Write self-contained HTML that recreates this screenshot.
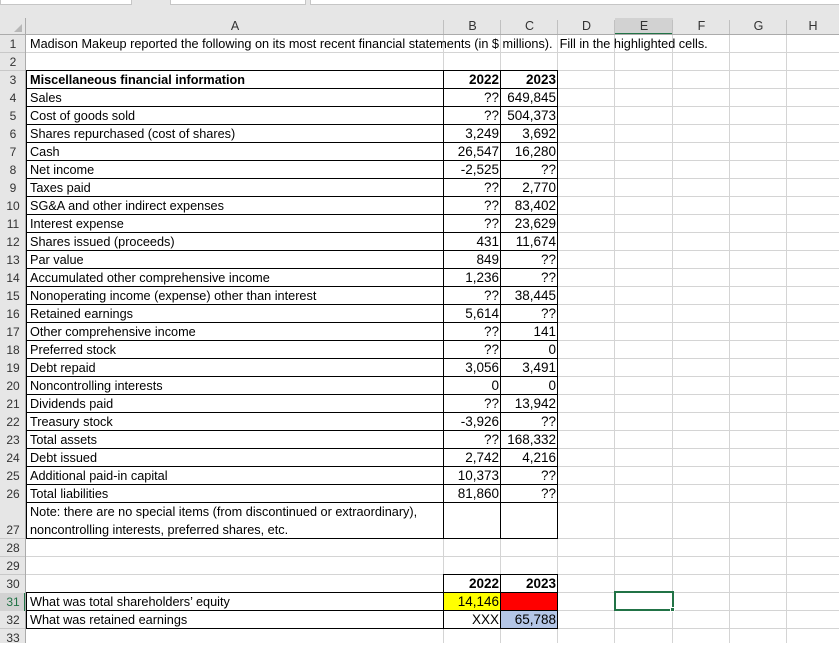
<!DOCTYPE html>
<html><head><meta charset="utf-8"><style>
*{margin:0;padding:0;box-sizing:border-box}
body{width:839px;height:643px;overflow:hidden;background:#fff;position:relative;font-family:"Liberation Sans",Arial,sans-serif;font-size:12.7px;color:#000}
.a{position:absolute}
.h{position:absolute;height:1px}
.v{position:absolute;width:1px}
.t{position:absolute;height:18px;line-height:18px;white-space:nowrap}
.r{position:absolute;height:18px;line-height:18px;text-align:right;white-space:nowrap;font-size:13.5px}
.rn{position:absolute;left:0;width:26px;height:18px;line-height:18px;text-align:center;font-size:12px;color:#333}
.ch{position:absolute;top:18px;height:17px;line-height:17px;text-align:center;font-size:12.5px;color:#333}
</style></head><body>
<div class="a" style="left:0;top:0;width:839px;height:35px;background:#e6e6e6"></div>
<div class="a" style="left:0;top:0;width:132px;height:5px;background:#fff;border:1px solid #c6c6c6;border-top:0"></div>
<div class="a" style="left:170px;top:0;width:136px;height:5px;background:#fff;border:1px solid #c6c6c6;border-top:0"></div>
<div class="a" style="left:310px;top:0;width:529px;height:5px;background:#fff;border:1px solid #c6c6c6;border-top:0;border-right:0"></div>
<div class="a" style="left:0;top:35px;width:26px;height:608px;background:#e6e6e6"></div>
<div class="a" style="left:0;top:593px;width:26px;height:18px;background:#d2d2d2;border-right:2px solid #217346"></div>
<div class="a" style="left:615px;top:18px;width:58px;height:17px;background:#d2d2d2;border-bottom:2px solid #217346"></div>
<div class="a" style="left:14px;top:24px;width:0;height:0;border-left:8px solid transparent;border-bottom:8px solid #b7b7b7"></div>
<div class="h" style="left:0;top:34px;width:839px;background:#ababab"></div>
<div class="v" style="left:25px;top:18px;height:625px;background:#ababab"></div>
<div class="ch" style="left:26px;width:418px">A</div>
<div class="ch" style="left:444px;width:57px">B</div>
<div class="ch" style="left:501px;width:57px">C</div>
<div class="ch" style="left:558px;width:57px">D</div>
<div class="ch" style="left:615px;width:58px">E</div>
<div class="ch" style="left:673px;width:57px">F</div>
<div class="ch" style="left:730px;width:57px">G</div>
<div class="ch" style="left:787px;width:52px">H</div>
<div class="v" style="left:443px;top:20px;height:14px;background:#c0c0c0"></div>
<div class="v" style="left:500px;top:20px;height:14px;background:#c0c0c0"></div>
<div class="v" style="left:557px;top:20px;height:14px;background:#c0c0c0"></div>
<div class="v" style="left:614px;top:20px;height:14px;background:#c0c0c0"></div>
<div class="v" style="left:672px;top:20px;height:14px;background:#c0c0c0"></div>
<div class="v" style="left:729px;top:20px;height:14px;background:#c0c0c0"></div>
<div class="v" style="left:786px;top:20px;height:14px;background:#c0c0c0"></div>
<div class="v" style="left:443px;top:35px;height:608px;background:#d4d4d4"></div>
<div class="v" style="left:500px;top:35px;height:608px;background:#d4d4d4"></div>
<div class="v" style="left:557px;top:35px;height:608px;background:#d4d4d4"></div>
<div class="v" style="left:614px;top:35px;height:608px;background:#d4d4d4"></div>
<div class="v" style="left:672px;top:35px;height:608px;background:#d4d4d4"></div>
<div class="v" style="left:729px;top:35px;height:608px;background:#d4d4d4"></div>
<div class="v" style="left:786px;top:35px;height:608px;background:#d4d4d4"></div>
<div class="h" style="left:26px;top:52px;width:813px;background:#d4d4d4"></div>
<div class="h" style="left:26px;top:70px;width:813px;background:#d4d4d4"></div>
<div class="h" style="left:26px;top:88px;width:813px;background:#d4d4d4"></div>
<div class="h" style="left:26px;top:106px;width:813px;background:#d4d4d4"></div>
<div class="h" style="left:26px;top:124px;width:813px;background:#d4d4d4"></div>
<div class="h" style="left:26px;top:142px;width:813px;background:#d4d4d4"></div>
<div class="h" style="left:26px;top:160px;width:813px;background:#d4d4d4"></div>
<div class="h" style="left:26px;top:178px;width:813px;background:#d4d4d4"></div>
<div class="h" style="left:26px;top:196px;width:813px;background:#d4d4d4"></div>
<div class="h" style="left:26px;top:214px;width:813px;background:#d4d4d4"></div>
<div class="h" style="left:26px;top:232px;width:813px;background:#d4d4d4"></div>
<div class="h" style="left:26px;top:250px;width:813px;background:#d4d4d4"></div>
<div class="h" style="left:26px;top:268px;width:813px;background:#d4d4d4"></div>
<div class="h" style="left:26px;top:286px;width:813px;background:#d4d4d4"></div>
<div class="h" style="left:26px;top:304px;width:813px;background:#d4d4d4"></div>
<div class="h" style="left:26px;top:322px;width:813px;background:#d4d4d4"></div>
<div class="h" style="left:26px;top:340px;width:813px;background:#d4d4d4"></div>
<div class="h" style="left:26px;top:358px;width:813px;background:#d4d4d4"></div>
<div class="h" style="left:26px;top:376px;width:813px;background:#d4d4d4"></div>
<div class="h" style="left:26px;top:394px;width:813px;background:#d4d4d4"></div>
<div class="h" style="left:26px;top:412px;width:813px;background:#d4d4d4"></div>
<div class="h" style="left:26px;top:430px;width:813px;background:#d4d4d4"></div>
<div class="h" style="left:26px;top:448px;width:813px;background:#d4d4d4"></div>
<div class="h" style="left:26px;top:466px;width:813px;background:#d4d4d4"></div>
<div class="h" style="left:26px;top:484px;width:813px;background:#d4d4d4"></div>
<div class="h" style="left:26px;top:502px;width:813px;background:#d4d4d4"></div>
<div class="h" style="left:26px;top:538px;width:813px;background:#d4d4d4"></div>
<div class="h" style="left:26px;top:556px;width:813px;background:#d4d4d4"></div>
<div class="h" style="left:26px;top:574px;width:813px;background:#d4d4d4"></div>
<div class="h" style="left:26px;top:592px;width:813px;background:#d4d4d4"></div>
<div class="h" style="left:26px;top:610px;width:813px;background:#d4d4d4"></div>
<div class="h" style="left:26px;top:628px;width:813px;background:#d4d4d4"></div>
<div class="h" style="left:0;top:52px;width:25px;background:#c8c8c8"></div>
<div class="h" style="left:0;top:70px;width:25px;background:#c8c8c8"></div>
<div class="h" style="left:0;top:538px;width:25px;background:#c8c8c8"></div>
<div class="h" style="left:0;top:556px;width:25px;background:#c8c8c8"></div>
<div class="h" style="left:0;top:574px;width:25px;background:#c8c8c8"></div>
<div class="h" style="left:0;top:628px;width:25px;background:#c8c8c8"></div>
<div class="a" style="left:444px;top:593px;width:57px;height:18px;background:#ffff00"></div>
<div class="a" style="left:501px;top:593px;width:57px;height:18px;background:#ff0000"></div>
<div class="a" style="left:501px;top:611px;width:57px;height:18px;background:#b4c6e7"></div>
<div class="h" style="left:26px;top:70px;width:532px;background:#000"></div>
<div class="h" style="left:26px;top:88px;width:532px;background:#000"></div>
<div class="h" style="left:26px;top:106px;width:532px;background:#000"></div>
<div class="h" style="left:26px;top:124px;width:532px;background:#000"></div>
<div class="h" style="left:26px;top:142px;width:532px;background:#000"></div>
<div class="h" style="left:26px;top:160px;width:532px;background:#000"></div>
<div class="h" style="left:26px;top:178px;width:532px;background:#000"></div>
<div class="h" style="left:26px;top:196px;width:532px;background:#000"></div>
<div class="h" style="left:26px;top:214px;width:532px;background:#000"></div>
<div class="h" style="left:26px;top:232px;width:532px;background:#000"></div>
<div class="h" style="left:26px;top:250px;width:532px;background:#000"></div>
<div class="h" style="left:26px;top:268px;width:532px;background:#000"></div>
<div class="h" style="left:26px;top:286px;width:532px;background:#000"></div>
<div class="h" style="left:26px;top:304px;width:532px;background:#000"></div>
<div class="h" style="left:26px;top:322px;width:532px;background:#000"></div>
<div class="h" style="left:26px;top:340px;width:532px;background:#000"></div>
<div class="h" style="left:26px;top:358px;width:532px;background:#000"></div>
<div class="h" style="left:26px;top:376px;width:532px;background:#000"></div>
<div class="h" style="left:26px;top:394px;width:532px;background:#000"></div>
<div class="h" style="left:26px;top:412px;width:532px;background:#000"></div>
<div class="h" style="left:26px;top:430px;width:532px;background:#000"></div>
<div class="h" style="left:26px;top:448px;width:532px;background:#000"></div>
<div class="h" style="left:26px;top:466px;width:532px;background:#000"></div>
<div class="h" style="left:26px;top:484px;width:532px;background:#000"></div>
<div class="h" style="left:26px;top:502px;width:532px;background:#000"></div>
<div class="h" style="left:26px;top:538px;width:532px;background:#000"></div>
<div class="v" style="left:26px;top:70px;height:469px;background:#000"></div>
<div class="v" style="left:443px;top:70px;height:469px;background:#000"></div>
<div class="v" style="left:500px;top:70px;height:469px;background:#000"></div>
<div class="v" style="left:557px;top:70px;height:469px;background:#000"></div>
<div class="h" style="left:443px;top:574px;width:115px;background:#000"></div>
<div class="h" style="left:26px;top:592px;width:532px;background:#000"></div>
<div class="h" style="left:26px;top:610px;width:532px;background:#000"></div>
<div class="h" style="left:26px;top:628px;width:532px;background:#000"></div>
<div class="v" style="left:26px;top:592px;height:37px;background:#000"></div>
<div class="v" style="left:443px;top:574px;height:55px;background:#000"></div>
<div class="v" style="left:500px;top:574px;height:55px;background:#000"></div>
<div class="v" style="left:557px;top:574px;height:55px;background:#000"></div>
<div class="a" style="left:614px;top:591px;width:60px;height:20px;border:2px solid #217346"></div>
<div class="a" style="left:670px;top:607px;width:5px;height:5px;background:#217346;border:1px solid #fff"></div>
<div class="rn" style="top:35px">1</div>
<div class="rn" style="top:53px">2</div>
<div class="rn" style="top:71px">3</div>
<div class="rn" style="top:89px">4</div>
<div class="rn" style="top:107px">5</div>
<div class="rn" style="top:125px">6</div>
<div class="rn" style="top:143px">7</div>
<div class="rn" style="top:161px">8</div>
<div class="rn" style="top:179px">9</div>
<div class="rn" style="top:197px">10</div>
<div class="rn" style="top:215px">11</div>
<div class="rn" style="top:233px">12</div>
<div class="rn" style="top:251px">13</div>
<div class="rn" style="top:269px">14</div>
<div class="rn" style="top:287px">15</div>
<div class="rn" style="top:305px">16</div>
<div class="rn" style="top:323px">17</div>
<div class="rn" style="top:341px">18</div>
<div class="rn" style="top:359px">19</div>
<div class="rn" style="top:377px">20</div>
<div class="rn" style="top:395px">21</div>
<div class="rn" style="top:413px">22</div>
<div class="rn" style="top:431px">23</div>
<div class="rn" style="top:449px">24</div>
<div class="rn" style="top:467px">25</div>
<div class="rn" style="top:485px">26</div>
<div class="rn" style="top:521px">27</div>
<div class="rn" style="top:539px">28</div>
<div class="rn" style="top:557px">29</div>
<div class="rn" style="top:575px">30</div>
<div class="rn" style="top:593px;color:#217346">31</div>
<div class="rn" style="top:611px">32</div>
<div class="rn" style="top:629px">33</div>
<div class="t" style="left:30px;top:35px">Madison Makeup reported the following on its most recent financial statements (in $ millions).&nbsp; Fill in the highlighted cells.</div>
<div class="t" style="left:30px;top:71px;font-weight:bold">Miscellaneous financial information</div>
<div class="t" style="left:30px;top:89px">Sales</div>
<div class="t" style="left:30px;top:107px">Cost of goods sold</div>
<div class="t" style="left:30px;top:125px">Shares repurchased (cost of shares)</div>
<div class="t" style="left:30px;top:143px">Cash</div>
<div class="t" style="left:30px;top:161px">Net income</div>
<div class="t" style="left:30px;top:179px">Taxes paid</div>
<div class="t" style="left:30px;top:197px">SG&amp;A and other indirect expenses</div>
<div class="t" style="left:30px;top:215px">Interest expense</div>
<div class="t" style="left:30px;top:233px">Shares issued (proceeds)</div>
<div class="t" style="left:30px;top:251px">Par value</div>
<div class="t" style="left:30px;top:269px">Accumulated other comprehensive income</div>
<div class="t" style="left:30px;top:287px">Nonoperating income (expense) other than interest</div>
<div class="t" style="left:30px;top:305px">Retained earnings</div>
<div class="t" style="left:30px;top:323px">Other comprehensive income</div>
<div class="t" style="left:30px;top:341px">Preferred stock</div>
<div class="t" style="left:30px;top:359px">Debt repaid</div>
<div class="t" style="left:30px;top:377px">Noncontrolling interests</div>
<div class="t" style="left:30px;top:395px">Dividends paid</div>
<div class="t" style="left:30px;top:413px">Treasury stock</div>
<div class="t" style="left:30px;top:431px">Total assets</div>
<div class="t" style="left:30px;top:449px">Debt issued</div>
<div class="t" style="left:30px;top:467px">Additional paid-in capital</div>
<div class="t" style="left:30px;top:485px">Total liabilities</div>
<div class="t" style="left:30px;top:503px">Note: there are no special items (from discontinued or extraordinary),</div>
<div class="t" style="left:30px;top:521px">noncontrolling interests, preferred shares, etc.</div>
<div class="t" style="left:30px;top:593px">What was total shareholders’ equity</div>
<div class="t" style="left:30px;top:611px">What was retained earnings</div>
<div class="r" style="left:444px;width:55px;top:71px;font-weight:bold">2022</div>
<div class="r" style="left:444px;width:55px;top:89px">??</div>
<div class="r" style="left:444px;width:55px;top:107px">??</div>
<div class="r" style="left:444px;width:55px;top:125px">3,249</div>
<div class="r" style="left:444px;width:55px;top:143px">26,547</div>
<div class="r" style="left:444px;width:55px;top:161px">-2,525</div>
<div class="r" style="left:444px;width:55px;top:179px">??</div>
<div class="r" style="left:444px;width:55px;top:197px">??</div>
<div class="r" style="left:444px;width:55px;top:215px">??</div>
<div class="r" style="left:444px;width:55px;top:233px">431</div>
<div class="r" style="left:444px;width:55px;top:251px">849</div>
<div class="r" style="left:444px;width:55px;top:269px">1,236</div>
<div class="r" style="left:444px;width:55px;top:287px">??</div>
<div class="r" style="left:444px;width:55px;top:305px">5,614</div>
<div class="r" style="left:444px;width:55px;top:323px">??</div>
<div class="r" style="left:444px;width:55px;top:341px">??</div>
<div class="r" style="left:444px;width:55px;top:359px">3,056</div>
<div class="r" style="left:444px;width:55px;top:377px">0</div>
<div class="r" style="left:444px;width:55px;top:395px">??</div>
<div class="r" style="left:444px;width:55px;top:413px">-3,926</div>
<div class="r" style="left:444px;width:55px;top:431px">??</div>
<div class="r" style="left:444px;width:55px;top:449px">2,742</div>
<div class="r" style="left:444px;width:55px;top:467px">10,373</div>
<div class="r" style="left:444px;width:55px;top:485px">81,860</div>
<div class="r" style="left:444px;width:55px;top:575px;font-weight:bold">2022</div>
<div class="r" style="left:444px;width:55px;top:593px">14,146</div>
<div class="r" style="left:444px;width:55px;top:611px">XXX</div>
<div class="r" style="left:501px;width:55px;top:71px;font-weight:bold">2023</div>
<div class="r" style="left:501px;width:55px;top:89px">649,845</div>
<div class="r" style="left:501px;width:55px;top:107px">504,373</div>
<div class="r" style="left:501px;width:55px;top:125px">3,692</div>
<div class="r" style="left:501px;width:55px;top:143px">16,280</div>
<div class="r" style="left:501px;width:55px;top:161px">??</div>
<div class="r" style="left:501px;width:55px;top:179px">2,770</div>
<div class="r" style="left:501px;width:55px;top:197px">83,402</div>
<div class="r" style="left:501px;width:55px;top:215px">23,629</div>
<div class="r" style="left:501px;width:55px;top:233px">11,674</div>
<div class="r" style="left:501px;width:55px;top:251px">??</div>
<div class="r" style="left:501px;width:55px;top:269px">??</div>
<div class="r" style="left:501px;width:55px;top:287px">38,445</div>
<div class="r" style="left:501px;width:55px;top:305px">??</div>
<div class="r" style="left:501px;width:55px;top:323px">141</div>
<div class="r" style="left:501px;width:55px;top:341px">0</div>
<div class="r" style="left:501px;width:55px;top:359px">3,491</div>
<div class="r" style="left:501px;width:55px;top:377px">0</div>
<div class="r" style="left:501px;width:55px;top:395px">13,942</div>
<div class="r" style="left:501px;width:55px;top:413px">??</div>
<div class="r" style="left:501px;width:55px;top:431px">168,332</div>
<div class="r" style="left:501px;width:55px;top:449px">4,216</div>
<div class="r" style="left:501px;width:55px;top:467px">??</div>
<div class="r" style="left:501px;width:55px;top:485px">??</div>
<div class="r" style="left:501px;width:55px;top:575px;font-weight:bold">2023</div>
<div class="r" style="left:501px;width:55px;top:611px">65,788</div>
</body></html>
